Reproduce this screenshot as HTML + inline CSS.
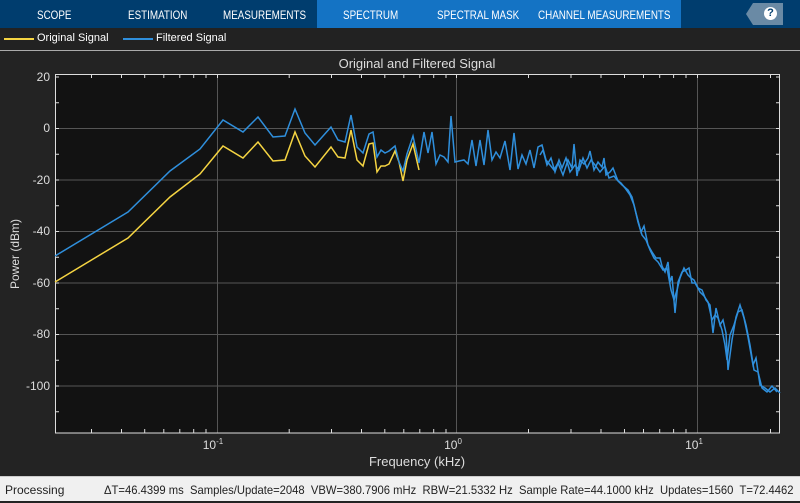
<!DOCTYPE html>
<html><head><meta charset="utf-8"><style>
body{margin:0;width:800px;height:500px;overflow:hidden;background:#232323;font-family:"Liberation Sans",sans-serif;position:relative}
.tb{position:absolute;left:0;top:0;width:800px;height:28px;background:#003d6e}
.act{position:absolute;left:317px;top:0;width:364px;height:28px;background:#1473c4}
.tab{position:absolute;top:0;height:28px;line-height:30px;color:#fff;font-size:12px;transform:scaleX(0.82);transform-origin:left;white-space:nowrap}
.help{position:absolute;left:746px;top:3px;width:37px;height:22px;background:#6a8aa5;clip-path:polygon(7px 0,100% 0,100% 100%,7px 100%,0 50%)}
.hc{position:absolute;left:764px;top:7px;width:13px;height:13px;border-radius:50%;background:#fff;color:#003d6e;font-size:11px;font-weight:bold;text-align:center;line-height:13px}
.leg{position:absolute;top:28px;height:22px;width:800px;border-bottom:1px solid #aaa;background:#222}
.lg{position:absolute;top:4px;color:#fff;font-size:11px;white-space:nowrap}
.sb{position:absolute;left:0;top:476px;width:800px;height:24px;background:#f0f0f0;border-top:1px solid #ccc;font-size:12px;color:#222;line-height:26px;white-space:nowrap}
</style></head><body>
<div class="tb"></div><div class="act"></div>
<div class="tab" style="left:37px">SCOPE</div>
<div class="tab" style="left:128px">ESTIMATION</div>
<div class="tab" style="left:223px">MEASUREMENTS</div>
<div class="tab" style="left:343px">SPECTRUM</div>
<div class="tab" style="left:437px">SPECTRAL MASK</div>
<div class="tab" style="left:538px">CHANNEL MEASUREMENTS</div>
<div class="help"></div><div class="hc">?</div>
<div class="leg">
<div style="position:absolute;left:4px;top:10px;width:30px;height:2px;background:#f5d442"></div>
<div class="lg" style="left:37px">Original Signal</div>
<div style="position:absolute;left:123px;top:10px;width:30px;height:2px;background:#2f8fdc"></div>
<div class="lg" style="left:156px">Filtered Signal</div>
</div>
<svg style="position:absolute;left:0;top:0" width="800" height="476" font-family="Liberation Sans,sans-serif">
<text x="417" y="68" fill="#ddd" font-size="13" text-anchor="middle">Original and Filtered Signal</text>
<rect x="55" y="74" width="725" height="359" fill="#121212"/>
<g stroke="#555" stroke-width="1">
<line x1="55" y1="128.5" x2="780" y2="128.5"/><line x1="55" y1="180" x2="780" y2="180"/><line x1="55" y1="231.5" x2="780" y2="231.5"/><line x1="55" y1="283" x2="780" y2="283"/><line x1="55" y1="334.5" x2="780" y2="334.5"/><line x1="55" y1="386" x2="780" y2="386"/>
<line x1="217.5" y1="74" x2="217.5" y2="433"/><line x1="456.5" y1="74" x2="456.5" y2="433"/><line x1="697.5" y1="74" x2="697.5" y2="433"/>
</g>
<g stroke="#ddd" stroke-width="1">
<path d="M91.5 74v4M121.5 74v4M144.7 74v4M163.8 74v4M179.8 74v4M193.7 74v4M206 74v4M289.2 74v4M331.5 74v4M361.5 74v4M384.8 74v4M403.8 74v4M419.8 74v4M433.7 74v4M446 74v4M528.5 74v4M571 74v4M601 74v4M624.5 74v4M643.5 74v4M659.7 74v4M673.6 74v4M686 74v4M770.5 74v4M217.5 74v4M456.5 74v4M697.5 74v4"/>
<path d="M91.5 433v-4M121.5 433v-4M144.7 433v-4M163.8 433v-4M179.8 433v-4M193.7 433v-4M206 433v-4M289.2 433v-4M331.5 433v-4M361.5 433v-4M384.8 433v-4M403.8 433v-4M419.8 433v-4M433.7 433v-4M446 433v-4M528.5 433v-4M571 433v-4M601 433v-4M624.5 433v-4M643.5 433v-4M659.7 433v-4M673.6 433v-4M686 433v-4M770.5 433v-4"/>
<path d="M55 77h4M55 102.8h4M55 128.5h4M55 154.3h4M55 180h4M55 205.8h4M55 231.5h4M55 257.3h4M55 283h4M55 308.8h4M55 334.5h4M55 360.3h4M55 386h4M55 411.8h4"/>
<path d="M780 77h-4M780 102.8h-4M780 128.5h-4M780 154.3h-4M780 180h-4M780 205.8h-4M780 231.5h-4M780 257.3h-4M780 283h-4M780 308.8h-4M780 334.5h-4M780 360.3h-4M780 386h-4M780 411.8h-4"/>
<rect x="55.5" y="74.5" width="724" height="358.5" fill="none"/>
</g>
<g fill="#ddd" font-size="12" text-anchor="end">
<text x="50" y="81">20</text><text x="50" y="132">0</text><text x="50" y="184">-20</text><text x="50" y="235">-40</text><text x="50" y="287">-60</text><text x="50" y="338">-80</text><text x="50" y="390">-100</text>
</g>
<g fill="#ddd" font-size="12" text-anchor="middle">
<text x="213" y="449">10<tspan font-size="8" dy="-5">-1</tspan></text>
<text x="453" y="449">10<tspan font-size="8" dy="-5">0</tspan></text>
<text x="694" y="449">10<tspan font-size="8" dy="-5">1</tspan></text>
<text x="417" y="466" font-size="13">Frequency (kHz)</text>
<text transform="translate(19,254) rotate(-90)" font-size="12">Power (dBm)</text>
</g>
<polyline fill="none" stroke="#f5d442" stroke-width="1.5" points="55,282 128,238 170,197 200,174 223,146 243,158 258,142 273,161 285,160 295,132 305,156 315,167 331,147 338,157 345,158 351,130 357,160 363,166 369,144 373,143 377,172 381,166 385,166 389,164 395,151 399,162 403,181 407,160 413,144 419,170"/>
<polyline fill="none" stroke="#2f8fdc" stroke-width="1.5" points="55,256 128,212 170,171 200,149 223,120 243,132 258,117 273,137 285,136 295,109 305,133 315,145 331,127 338,140 345,142 351,115 357,147 363,153 369,134 373,132 377,157 381,150 385,153 389,151 395,146 399,162 403,171 407,154 413,136 419,163 424,132 428,153 432,132 436,164 440,155 444,157 448,162 451,116 455,162 459,161 464,160 468,164 472,140 476,166 480,140 484,165 488,130 492,160 496,152 500,158 505,141 510,170 514,133 518,169 522,155 526,164 530,150 534,168 538,147 542,145 546,160 550,165 554,170 558,163 563,175 568,160 572,168 574,144 577,176 580,160 584,164 588,158 590,151 594,170 598,162 602,167 604,158 606,175 610,172 613,168 618,181 622,185 628,190 632,197 636,213 641,232 644,226 648,245 652,252 656,258 660,258 662,266 665,272 668,262 670,282 672,276 675,313 678,282 682,272 686,270 689,268 692,283 695,283 698,288 702,290 706,300 710,305 713,333 716,308 720,325 723,320 726,333 728,370 732,340 736,317 740,305 744,318 748,337 753,365 756,358 760,385 765,388 770,392 775,388 780,393"/>
<polyline fill="none" stroke="#2f8fdc" stroke-width="1.5" points="540,155 543,150 547,165 551,158 555,172 559,160 562,168 566,158 570,172 575,165 579,170 583,158 587,168 591,160 595,165 600,172 605,166 609,178 614,176 617,180 621,183 625,188 630,195 634,205 638,222 642,235 646,240 650,250 654,258 658,262 663,270 667,268 671,290 674,300 677,290 680,278 684,268 688,275 691,278 694,280 697,286 700,292 704,296 708,302 712,320 715,315 718,318 722,330 725,345 727,360 730,335 734,325 738,312 742,310 746,325 750,345 754,370 758,372 762,388 767,392 772,386 777,392"/>
</svg>
<div class="sb"><span style="position:absolute;left:5px">Processing</span><span style="position:absolute;left:104px;transform:scaleX(0.937);transform-origin:left">ΔT=46.4399 ms&nbsp; Samples/Update=2048&nbsp; VBW=380.7906 mHz&nbsp; RBW=21.5332 Hz&nbsp; Sample Rate=44.1000 kHz&nbsp; Updates=1560&nbsp; T=72.4462</span></div>
</body></html>
